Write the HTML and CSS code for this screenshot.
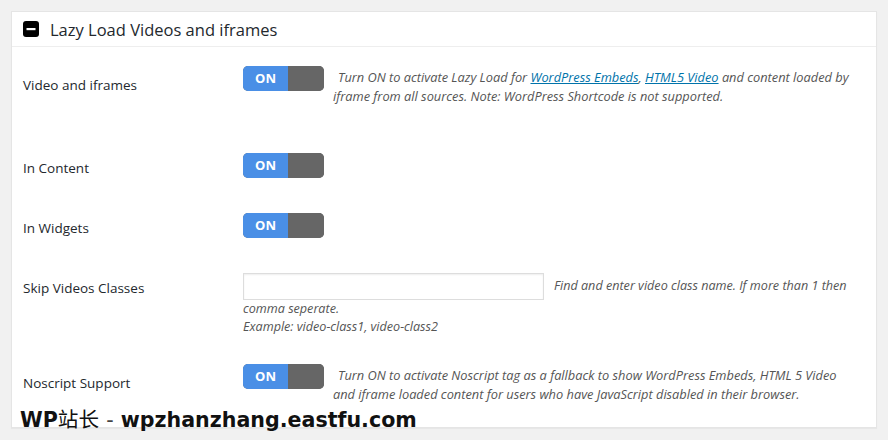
FILE: index.html
```html
<!DOCTYPE html>
<html lang="en">
<head>
<meta charset="utf-8">
<title>Lazy Load Videos and iframes</title>
<link rel="stylesheet" href="styles.css">
</head>
<body>
<div class="panel">
  <div class="panel-head">
    <span class="head-icon"><svg width="16" height="16" viewBox="0 0 16 16"><rect x="0" y="0" width="16" height="16" rx="3" fill="#000"/><rect x="3.5" y="7" width="9" height="2.2" fill="#fff"/></svg></span>
    <h2 class="title">Lazy Load Videos and iframes</h2>
  </div>
  <div class="rows">
    <div class="row row-1 has-desc">
      <div class="label">Video and iframes</div>
      <div class="field flex-field">
        <span class="toggle"><span class="on">ON</span><span class="off"></span></span>
        <div class="desc">Turn ON to activate Lazy Load for <a href="#">WordPress Embeds</a>, <a href="#">HTML5 Video</a> and content loaded by iframe from all sources. Note: WordPress Shortcode is not supported.</div>
      </div>
    </div>
    <div class="row row-s">
      <div class="label">In Content</div>
      <div class="field"><span class="toggle"><span class="on">ON</span><span class="off"></span></span></div>
    </div>
    <div class="row row-s">
      <div class="label">In Widgets</div>
      <div class="field"><span class="toggle"><span class="on">ON</span><span class="off"></span></span></div>
    </div>
    <div class="row row-4">
      <div class="label">Skip Videos Classes</div>
      <div class="field text-field"><input class="text-input" type="text"><span class="note">Find and enter video class name. If more than 1 then comma seperate.</span><br><span class="note">Example: video-class1, video-class2</span></div>
    </div>
    <div class="row row-5 has-desc">
      <div class="label">Noscript Support</div>
      <div class="field flex-field">
        <span class="toggle"><span class="on">ON</span><span class="off"></span></span>
        <div class="desc">Turn ON to activate Noscript tag as a fallback to show WordPress Embeds, HTML 5 Video and iframe loaded content for users who have JavaScript disabled in their browser.</div>
      </div>
    </div>
  </div>
</div>
<div class="watermark">WP<span class="cjk">站长</span> <span class="dash">-</span> wpzhanzhang.eastfu.com</div>
</body>
</html>
```

FILE: styles.css
```css
* { box-sizing: border-box; }
html, body { margin: 0; }
body {
  background: #f1f1f1;
  padding: 11px 12px 0 11px;
  font-family: "Open Sans", "Noto Sans", Arial, sans-serif;
  color: #23282d;
  position: relative;
  height: 440px;
  overflow: hidden;
}
.panel {
  width: 866px;
  height: 417px;
  background: #fff;
  border: 1px solid #e5e5e5;
  box-shadow: 0 1px 1px rgba(0,0,0,.04);
}
.panel-head {
  display: flex;
  align-items: center;
  height: 35px;
  padding: 0 11px;
  border-bottom: 1px solid #eee;
  gap: 11px;
}
.head-icon { display: block; width: 16px; height: 16px; }
.head-icon svg { display: block; }
.title {
  margin: 0;
  font-size: 16.5px;
  font-weight: 400;
  color: #23282d;
}
.rows { padding-left: 11px; }
.row {
  display: grid;
  grid-template-columns: 220px 1fr;
  padding-top: 19px;
}
.row-1 { height: 87px; }
.row-s { height: 60px; }
.row-4 { height: 91px; }
.row-5 { height: 82px; }
.label {
  font-size: 13.5px;
  line-height: 20px;
  padding-top: 5px;
  color: #23282d;
}
.has-desc .label { padding-top: 9px; }
.field { padding-right: 20px; }
.flex-field { display: flex; align-items: flex-start; }
.toggle {
  display: inline-flex;
  flex: none;
  width: 81px;
  height: 25px;
  border-radius: 5px;
  overflow: hidden;
  background: #666;
  vertical-align: top;
}
.toggle .on {
  width: 45px;
  background: #4a8fe6;
  color: #fff;
  font-weight: 700;
  font-size: 13px;
  display: flex;
  align-items: center;
  justify-content: center;
  padding-bottom: 1px;
}
.toggle .off { flex: 1; background: #666; }
.desc {
  margin-left: 9px;
  text-indent: 5px;
  padding-top: 2px;
  font-size: 12.8px;
  line-height: 19px;
  font-style: italic;
  color: #555;
}
.desc a { color: #0073aa; }
.text-field {
  font-size: 12.6px;
  line-height: 18px;
  font-style: italic;
  color: #555;
}
.text-input {
  width: 301px;
  height: 27px;
  border: 1px solid #ddd;
  box-shadow: inset 0 1px 2px rgba(0,0,0,.07);
  vertical-align: middle;
  margin: 0 10px 0 0;
  padding: 0 6px;
  background: #fff;
}
.watermark {
  position: absolute;
  left: 20px;
  top: 403px;
  font-family: "DejaVu Sans", Verdana, sans-serif;
  font-weight: 700;
  font-size: 20.6px;
  color: #111;
  white-space: nowrap;
}
.watermark .cjk {
  font-family: "Noto Sans CJK SC", sans-serif;
  font-weight: 400;
}
.watermark .dash { font-weight: 400; color: #444; }
```
